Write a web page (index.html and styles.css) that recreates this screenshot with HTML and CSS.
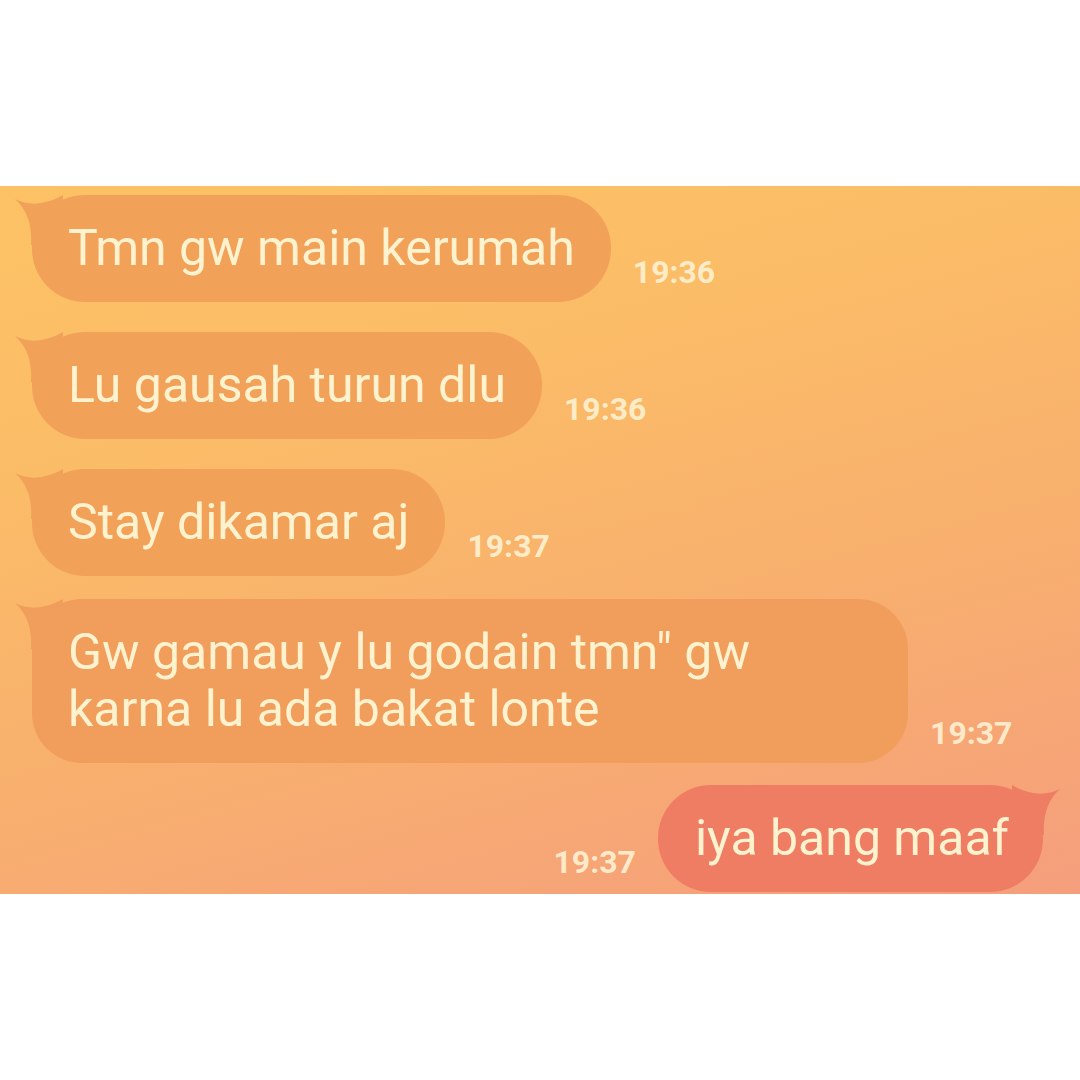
FILE: index.html
```html
<!DOCTYPE html>
<html>
<head>
<meta charset="utf-8">
<link rel="stylesheet" href="styles.css">
</head>
<body>
<div class="page">
  <div class="chat">
    <div class="row in r1">
      <div class="bubble">
        <svg class="tail" width="50" height="50" viewBox="0 0 50 50"><path d="M2 4 Q 24 15 50 0 L 50 50 L 18 50 Q 20 20 2 4 Z"/></svg>
        <span class="msg">Tmn gw main kerumah</span>
      </div>
      <span class="time">19:36</span>
    </div>
    <div class="row in r2">
      <div class="bubble">
        <svg class="tail" width="50" height="50" viewBox="0 0 50 50"><path d="M2 4 Q 24 15 50 0 L 50 50 L 18 50 Q 20 20 2 4 Z"/></svg>
        <span class="msg">Lu gausah turun dlu</span>
      </div>
      <span class="time">19:36</span>
    </div>
    <div class="row in r3">
      <div class="bubble">
        <svg class="tail" width="50" height="50" viewBox="0 0 50 50"><path d="M2 4 Q 24 15 50 0 L 50 50 L 18 50 Q 20 20 2 4 Z"/></svg>
        <span class="msg">Stay dikamar aj</span>
      </div>
      <span class="time">19:37</span>
    </div>
    <div class="row in r4">
      <div class="bubble wide">
        <svg class="tail" width="50" height="50" viewBox="0 0 50 50"><path d="M2 4 Q 24 15 50 0 L 50 50 L 18 50 Q 20 20 2 4 Z"/></svg>
        <span class="msg">Gw gamau y lu godain tmn" gw<br>karna lu ada bakat lonte</span>
      </div>
      <span class="time">19:37</span>
    </div>
    <div class="row out r5">
      <span class="time">19:37</span>
      <div class="bubble mine">
        <svg class="tail tail-r" width="50" height="50" viewBox="0 0 50 50"><path d="M48 4 Q 26 15 0 0 L 0 50 L 32 50 Q 30 20 48 4 Z"/></svg>
        <span class="msg">iya bang maaf</span>
      </div>
    </div>
  </div>
</div>
</body>
</html>
```

FILE: styles.css
```css
html, body {
  margin: 0;
  padding: 0;
  background: #ffffff;
}
.page {
  width: 1080px;
  height: 1080px;
  display: flex;
  flex-direction: column;
  justify-content: center;
}
.chat {
  height: 708px;
  box-sizing: border-box;
  padding: 9px 0 0 0;
  background: linear-gradient(165deg, #fdc265 0%, #fbbc67 30%, #f8ae6f 65%, #f59e7d 100%);
  display: flex;
  flex-direction: column;
  font-family: Roboto, "Noto Sans", sans-serif;
}
.row {
  display: flex;
  align-items: flex-end;
  gap: 22px;
}
.row.in {
  padding-left: 32px;
}
.row.out {
  justify-content: flex-end;
  padding-right: 37px;
}
.r2, .r3 { margin-top: 30px; }
.r4 { margin-top: 23px; }
.r5 { margin-top: 22px; }
.bubble {
  position: relative;
  background: #f2a159;
  border-radius: 53px;
  padding: 25px 36px 25px 36px;
  color: #fff3cf;
  font-size: 50px;
  line-height: 57px;
  fill: #f2a159;
}
.bubble.wide {
  background: #f19d5c;
  fill: #f19d5c;
  border-radius: 50px;
  padding-right: 158px;
}
.bubble.mine {
  background: #ef7d63;
  fill: #ef7d63;
  padding: 25px 34px 25px 37px;
}
.msg {
  position: relative;
  z-index: 1;
}
.tail {
  position: absolute;
  left: -19px;
  top: 0;
  display: block;
}
.tail-r {
  left: auto;
  right: -19px;
}
.time {
  color: #fff2d2;
  opacity: 0.9;
  font-size: 32px;
  font-weight: bold;
  line-height: 32px;
  padding-bottom: 14px;
}
```
